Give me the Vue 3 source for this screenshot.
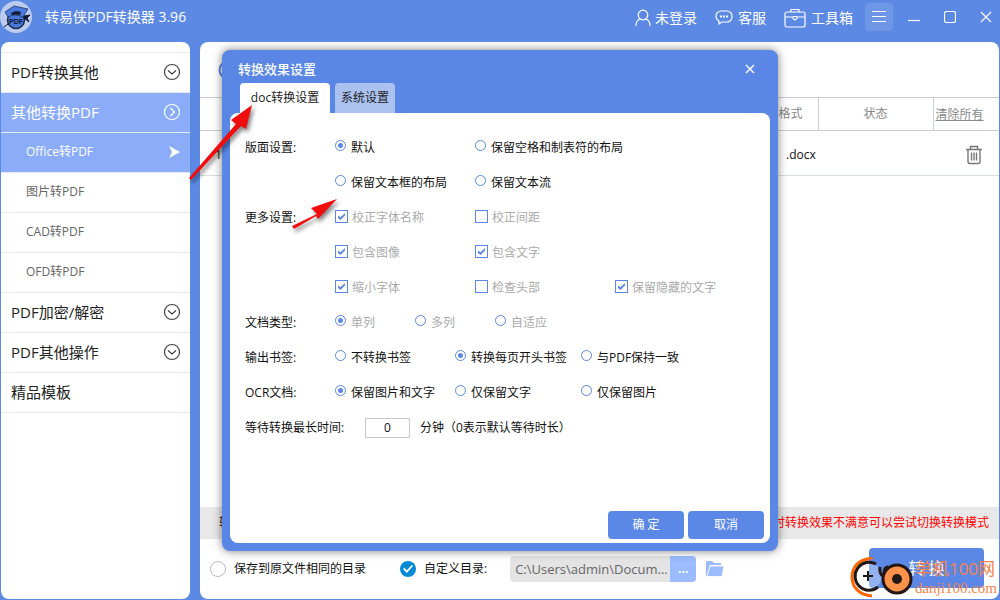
<script setup>
import { reactive, ref } from 'vue'

const menu = [
  { text: 'PDF转换其他', icon: 'down' },
  { text: '其他转换PDF', icon: 'right', active: true },
  { text: 'Office转PDF', sub: true, icon: 'pointer', active: true },
  { text: '图片转PDF', sub: true },
  { text: 'CAD转PDF', sub: true },
  { text: 'OFD转PDF', sub: true },
  { text: 'PDF加密/解密', icon: 'down' },
  { text: 'PDF其他操作', icon: 'down' },
  { text: '精品模板' }
]

const rows = reactive([
  {
    label: '版面设置:', type: 'radio', name: 'layout', cols: 'wide', value: '默认',
    options: ['默认', '保留空格和制表符的布局', '', '保留文本框的布局', '保留文本流']
  },
  {
    label: '更多设置:', type: 'checkbox', name: 'more', cols: 'wide', disabled: true,
    value: ['校正字体名称', '包含图像', '包含文字', '缩小字体', '保留隐藏的文字'],
    options: ['校正字体名称', '校正间距', '', '包含图像', '包含文字', '', '缩小字体', '检查头部', '保留隐藏的文字']
  },
  { label: '文档类型:', type: 'radio', name: 'doctype', cols: 'narrow', disabled: true, value: '单列', options: ['单列', '多列', '自适应'] },
  { label: '输出书签:', type: 'radio', name: 'bookmark', cols: 'medium', value: '转换每页开头书签', options: ['不转换书签', '转换每页开头书签', '与PDF保持一致'] },
  { label: 'OCR文档:', type: 'radio', name: 'ocr', cols: 'medium', value: '保留图片和文字', options: ['保留图片和文字', '仅保留文字', '仅保留图片'] }
])

const wait = ref('0')
const target = ref('custom')
const folder = ref('C:\\Users\\admin\\Docum...')
</script>

<template>
  <div class="app">
    <header class="titlebar">
      <svg class="logo" viewBox="0 0 32 32" aria-hidden="true">
        <circle cx="16" cy="16" r="16" fill="#bccbf0" />
        <circle cx="16" cy="19" r="8.500" fill="#4a79dd" stroke="#1d2a48" stroke-width="1.500" />
        <path d="M5 11 14 5l14 3-5 8q-8-4-15 0z" fill="#4a7ae0" stroke="#25345c" stroke-width=".8" />
        <path d="m11 12 5-2 5 1-1 3q-4-1-8 0z" fill="#111a2e" />
        <path d="M4 26 8 23M24 15l6-1-3 3 2 4-5-4z" fill="#111a2e" stroke="#111a2e" />
        <text x="16" y="23" text-anchor="middle" class="logo-text">PDF</text>
      </svg>
      <h1>转易侠PDF转换器 3.96</h1>
      <nav class="actions">
        <a href="#" class="login">
          <svg width="16" height="18" viewBox="0 0 16 18"><circle cx="8" cy="6" r="4.800" /><path d="M1 17c0-4 2-6.500 4.500-7M15 17c0-4-2-6.500-4.500-7" /></svg>未登录
        </a>
        <a href="#" class="service">
          <svg width="18" height="18" viewBox="0 0 18 18"><path d="M6 2h6a5 5 0 0 1 5 5v1a5 5 0 0 1-5 5H7l-3 2v-3a5 5 0 0 1-3-4V7a5 5 0 0 1 5-5z" /><path d="M5 7.500h2M8 7.500h2M11 7.500h2" stroke-width="2" /></svg>客服
        </a>
        <a href="#" class="tools">
          <svg width="22" height="20" viewBox="0 0 22 20"><rect x="1" y="4" width="20" height="15" rx="2" /><path d="M7 4V1.500h8V4M1 9h7M14 9h7M9 8.500h4v2l-2 1.500-2-1.500z" /></svg>工具箱
        </a>
        <button type="button" class="menu-btn" aria-label="菜单"><svg width="14" height="12" viewBox="0 0 14 12"><path d="M0 .5h14M0 5.500h14M0 10.500h14" /></svg></button>
        <button type="button" aria-label="最小化"><svg width="12" height="14" viewBox="0 0 12 14"><path d="M0 10.500h12" /></svg></button>
        <button type="button" aria-label="最大化"><svg width="12" height="12" viewBox="0 0 12 12"><rect x=".5" y=".5" width="11" height="11" rx="2" /></svg></button>
        <button type="button" aria-label="关闭"><svg width="12" height="12" viewBox="0 0 12 12"><path d="m1 1 10 10M11 1 1 11" /></svg></button>
      </nav>
    </header>

    <div class="body">
      <aside>
        <ul>
          <li v-for="m in menu" :key="m.text">
            <a href="#" :class="{ sub: m.sub, active: m.active }">
              <span>{{ m.text }}</span>
              <svg v-if="m.icon === 'down'" width="18" height="18" viewBox="0 0 18 18"><circle cx="9" cy="9" r="7.500" /><path d="m5 7.500 4 3.500 4-3.500" /></svg>
              <svg v-else-if="m.icon === 'right'" width="18" height="18" viewBox="0 0 18 18"><circle cx="9" cy="9" r="7.500" /><path d="m7.500 5 4 4-4 4" /></svg>
              <svg v-else-if="m.icon === 'pointer'" class="solid" width="14" height="12" viewBox="0 0 14 12"><path d="M2 0 13 6 2 12 5 6z" /></svg>
            </a>
          </li>
        </ul>
      </aside>

      <main>
        <div class="toolbar">
          <svg width="20" height="20" viewBox="0 0 20 20"><circle cx="10" cy="10" r="8.500" fill="none" stroke="#5a88e4" stroke-width="2" /></svg>
        </div>
        <table>
          <thead>
            <tr><th class="c-name"></th><th class="c-format">格式</th><th class="c-state">状态</th><th class="c-clear"><a href="#">清除所有</a></th></tr>
          </thead>
          <tbody>
            <tr>
              <td class="c-name">1</td>
              <td class="c-format">.docx</td>
              <td></td>
              <td class="c-clear">
                <button type="button" aria-label="删除"><svg width="18" height="20" viewBox="0 0 18 20"><path d="M1 4.500h16M5.500 4V1.500h7V4M3 5v11.500Q3 18.500 5 18.500h8q2 0 2-2V5" /><path d="M6.500 7.500v8M9 7.500v8M11.500 7.500v8" /></svg></button>
              </td>
            </tr>
          </tbody>
        </table>
        <div class="notice"><span>转</span><strong>时转换效果不满意可以尝试切换转换模式</strong></div>
        <footer>
          <label class="where"><input v-model="target" type="radio" value="same" name="target">保存到原文件相同的目录</label>
          <label class="where"><input v-model="target" type="radio" value="custom" name="target">自定义目录:</label>
          <div class="path">
            <input v-model="folder" type="text" aria-label="目录">
            <button type="button" aria-label="浏览">...</button>
          </div>
          <button type="button" class="open" aria-label="打开目录">
            <svg width="18" height="16" viewBox="0 0 18 16"><path d="M0 15V1q0-1 1-1h5l2 2h7v2H4L1 15z" /><path d="M4 5h14l-2 10.500H1z" /></svg>
          </button>
          <button type="button" class="convert">转 换</button>
        </footer>
      </main>
    </div>

    <div class="overlay">
      <section class="dialog" role="dialog" aria-labelledby="dlg-title">
        <div class="dlg-head">
          <h2 id="dlg-title">转换效果设置</h2>
          <button type="button" aria-label="关闭"><svg width="10" height="10" viewBox="0 0 10 10"><path d="m1 1 8 8M9 1 1 9" /></svg></button>
        </div>
        <div class="tabs">
          <button type="button" class="tab on">doc转换设置</button>
          <button type="button" class="tab">系统设置</button>
        </div>
        <form class="panel" @submit.prevent>
          <div v-for="r in rows" :key="r.name" class="row">
            <span class="row-label">{{ r.label }}</span>
            <div class="options" :class="[r.cols, { dim: r.disabled }]" role="group" :aria-label="r.label">
              <template v-for="(o, i) in r.options" :key="i">
                <label v-if="o">
                  <input v-model="r.value" :type="r.type" :name="r.name" :value="o" :disabled="r.disabled">{{ o }}
                </label>
                <span v-else></span>
              </template>
            </div>
          </div>
          <div class="row wait">
            <label for="wait">等待转换最长时间:</label>
            <input id="wait" v-model="wait" type="text">
            <span>分钟（0表示默认等待时长）</span>
          </div>
          <div class="buttons">
            <button type="submit">确 定</button>
            <button type="button">取消</button>
          </div>
        </form>
      </section>
      <svg class="arrows" viewBox="0 0 180 140" aria-hidden="true">
        <path d="M1 78 48 24 43 20 64 5 58 29 53 26 3 80z" />
        <path d="M104 126 129 114 123 108 149 99 130 119 128 116 106 129z" />
      </svg>
    </div>

    <div class="watermark">
      <svg width="64" height="42" viewBox="0 0 64 42" aria-hidden="true">
        <path d="M20 3C9 3 2 11 2 21s7 18 20 19" fill="none" stroke="#f60" stroke-width="3" />
        <path d="M15 3q6-4 9 0-5 0-9 2z" fill="#f60" />
        <circle cx="19" cy="20" r="13" fill="#fff" fill-opacity=".35" />
        <path d="M26 8A14 14 0 1 0 28 31M30 11q-1 7 3 9M34 18q0-7 4-7" fill="none" stroke="#221815" stroke-width="3" />
        <path d="M13 20h10M18 15v10" stroke="#221815" stroke-width="2" />
        <circle cx="47" cy="23" r="14" fill="#ff924a" stroke="#221815" stroke-width="3" />
        <circle cx="47" cy="23" r="5" fill="#221815" />
      </svg>
      <p><span>单机100网</span><small>danji100.com</small></p>
    </div>
  </div>
</template>

<style>
body { margin: 0; }
</style>

<style scoped>
* { box-sizing: border-box; }
.app {
  position: relative;
  display: flex;
  flex-direction: column;
  min-height: 100vh;
  background: #5b89e4;
  font: 12px/20px "Open Sans", "Noto Sans CJK SC", sans-serif;
  color: #111;
  overflow: hidden;
}
button { padding: 0; border: 0; background: none; font: inherit; color: inherit; cursor: pointer; display: flex; align-items: center; justify-content: center; }
a { color: inherit; text-decoration: none; }
h1, h2, p, ul { margin: 0; padding: 0; list-style: none; font-weight: 400; }
svg { flex: none; display: block; }

.titlebar { height: 42px; display: flex; align-items: center; padding: 0 8px 8px 0; color: #fff; font-size: 14px; }
.logo { width: 32px; height: 32px; margin-right: 13px; }
.logo-text { font: bold 7px "Liberation Sans", sans-serif; fill: #0c1730; }
.titlebar h1 { font-size: 14px; line-height: 20px; }
.actions { margin-left: auto; display: flex; align-items: center; }
.actions a { display: flex; align-items: center; gap: 4px; margin-right: 18px; padding-top: 1px; }
.actions svg { fill: none; stroke: #fff; stroke-width: 1.2; }
.actions button + button { margin-left: 24px; }
.actions button.menu-btn + button { margin-left: 15px; }
.menu-btn { width: 28px; height: 28px; border-radius: 4px; background: #6e97e8; }
.actions .service { gap: 5px; }
.actions .tools { gap: 5px; margin-right: 12px; }

.body { flex: 1; display: flex; gap: 10px; padding: 0 1px 1px; }
aside { width: 189px; padding-top: 10px; background: #fff; border-radius: 8px; }
aside ul { border-top: 1px solid #ececec; }
aside a { display: flex; align-items: center; justify-content: space-between; height: 40px; padding: 0 9px 1px 10px; border-bottom: 1px solid #e9e9e9; font-size: 15px; color: #222; }
aside a.sub { padding-left: 25px; font-size: 12px; color: #666; }
aside a.active { background: #8aacf9; color: #fff; }
aside svg { fill: none; stroke: #444; stroke-width: 1.2; }
aside .active svg { stroke: #fff; }
aside svg.solid { fill: #fff; stroke: none; }

main { flex: 1; min-width: 0; display: flex; flex-direction: column; background: #fff; border-radius: 8px; overflow: hidden; }
.toolbar { height: 55px; padding: 18px; }
table { width: 100%; table-layout: fixed; border-collapse: collapse; }
th { height: 33px; padding: 0; border: 1px solid #c6cfd9; border-width: 1px 1px 1px 0; font-weight: 400; color: #888; }
th:last-child { border-right: 0; }
td { height: 45px; padding: 3px 0 0; border-bottom: 1px solid #d8dfe6; }
th.c-format { width: 79px; padding-right: 15px; text-align: right; }
td.c-format { padding-left: 47px; }
td.c-name { padding-left: 15px; }
.c-state { width: 115px; }
.c-clear { width: 66px; }
th.c-clear { text-align: left; padding: 2px 0 0 2px; }
th a { text-decoration: underline; }
td button { margin-left: 32px; }
td svg { fill: none; stroke: #777; stroke-width: 1.4; }
.notice { margin-top: auto; height: 32px; padding: 0 10px 0 19px; display: flex; align-items: center; justify-content: space-between; background: #e8e8e8; }
.notice strong { font-weight: 400; color: #f00; }
footer { height: 60px; display: flex; align-items: center; padding: 0 15px 0 10px; }
.where { display: flex; align-items: center; gap: 8px; margin-right: 34px; }
.where + .where { margin-right: 23px; }
.where input { appearance: none; width: 16px; height: 16px; margin: 0; border: 1px solid #bbb; border-radius: 50%; }
.where input:checked { border: 0; background: #078ad4; display: grid; place-items: center; }
.where input:checked::before { content: ""; width: 10px; height: 8px; background: #fff; clip-path: polygon(0 50%, 12% 34%, 38% 66%, 88% 0, 100% 14%, 38% 100%); }
.path { display: flex; width: 186px; height: 26px; border-radius: 4px; overflow: hidden; background: #e4e4e4; }
.path input { flex: 1; min-width: 0; padding: 0 0 0 5px; border: 0; background: none; font: inherit; font-size: 13px; color: #666; }
.path button { width: 26px; background: #9cbbff; color: #fff; font-weight: 700; }
.open { margin-left: 10px; }
.open svg { fill: #9cbbff; }
.open path + path { stroke: #fff; stroke-width: .8; }
.convert { width: 115px; height: 40px; margin: 0 0 2px auto; border-radius: 4px; background: #5b88e6; color: #fff; font-size: 16px; }

.overlay { position: absolute; inset: 0; padding-top: 1px; display: flex; align-items: center; justify-content: center; }
.dialog { position: relative; width: 556px; padding: 8px; border-radius: 8px; background: #5a87e5; box-shadow: 0 0 10px rgba(0, 0, 0, .5); }
.dlg-head { height: 21px; margin-bottom: 4px; padding: 0 15px 0 8px; display: flex; align-items: center; justify-content: space-between; color: #fff; }
h2 { font-size: 13px; font-weight: 500; line-height: 20px; }
.dlg-head svg { fill: none; stroke: #fff; stroke-width: 1.4; }
.tabs { display: flex; gap: 5px; padding-left: 10px; }
.tab { width: 60px; height: 30px; border-radius: 4px 4px 0 0; background: #abc2f1; color: #222; }
.tab.on { width: 90px; background: #fff; }
.panel { padding: 16px 6px 4px 15px; border-radius: 8px; background: #fff; }
.row { display: flex; }
.row-label { width: 90px; padding-top: 2px; line-height: 33px; }
.options { display: grid; grid-auto-rows: 35px; align-items: center; }
.options.wide { grid-template-columns: repeat(3, 140px); }
.options.narrow { grid-template-columns: repeat(3, 80px); }
.options.medium { grid-template-columns: 120px 126px 120px; }
.options label { display: flex; align-items: center; gap: 4px; padding-top: 2px; white-space: nowrap; }
.options.dim label { color: #aaa; }
.options input { appearance: none; flex: none; display: grid; place-items: center; border: 1px solid #5b88e6; background: #fff; }
.options input[type="radio"] { width: 11px; height: 11px; margin: 0 1px 4px 0; border-radius: 50%; }
.options input[type="radio"]:checked::before { content: ""; width: 5px; height: 5px; border-radius: 50%; background: #5b88e6; }
.options input[type="checkbox"] { width: 13px; height: 13px; margin: 0 0 2px; }
.options input[type="checkbox"]:checked::before { content: ""; width: 7px; height: 7px; background: #5b88e6; clip-path: polygon(0 36%, 36% 60%, 100% 0, 100% 36%, 36% 100%, 0 70%); }
.wait { align-items: center; height: 38px; }
.wait label { width: 120px; }
.wait input { width: 45px; height: 20px; margin-right: 10px; padding: 0; border: 1px solid #c8c8c8; background: #fff; font: inherit; color: #111; text-align: center; }
.buttons { display: flex; justify-content: flex-end; gap: 4px; margin-top: 64px; }
.buttons button { width: 76px; height: 28px; border-radius: 4px; background: #5b88e6; color: #fff; }
.arrows { position: absolute; left: 188px; top: 100px; width: 180px; height: 140px; fill: #f00d0d; filter: drop-shadow(2px 3px 2px rgba(0, 0, 0, .5)); pointer-events: none; }

.watermark { position: absolute; right: 3px; bottom: 2px; display: flex; gap: 1px; pointer-events: none; color: #f58349; }
.watermark p { display: flex; flex-direction: column; padding-top: 3px; }
.watermark span { font-size: 17px; line-height: 20px; }
.watermark small { font: 15px/18px "Liberation Serif", serif; }
</style>
